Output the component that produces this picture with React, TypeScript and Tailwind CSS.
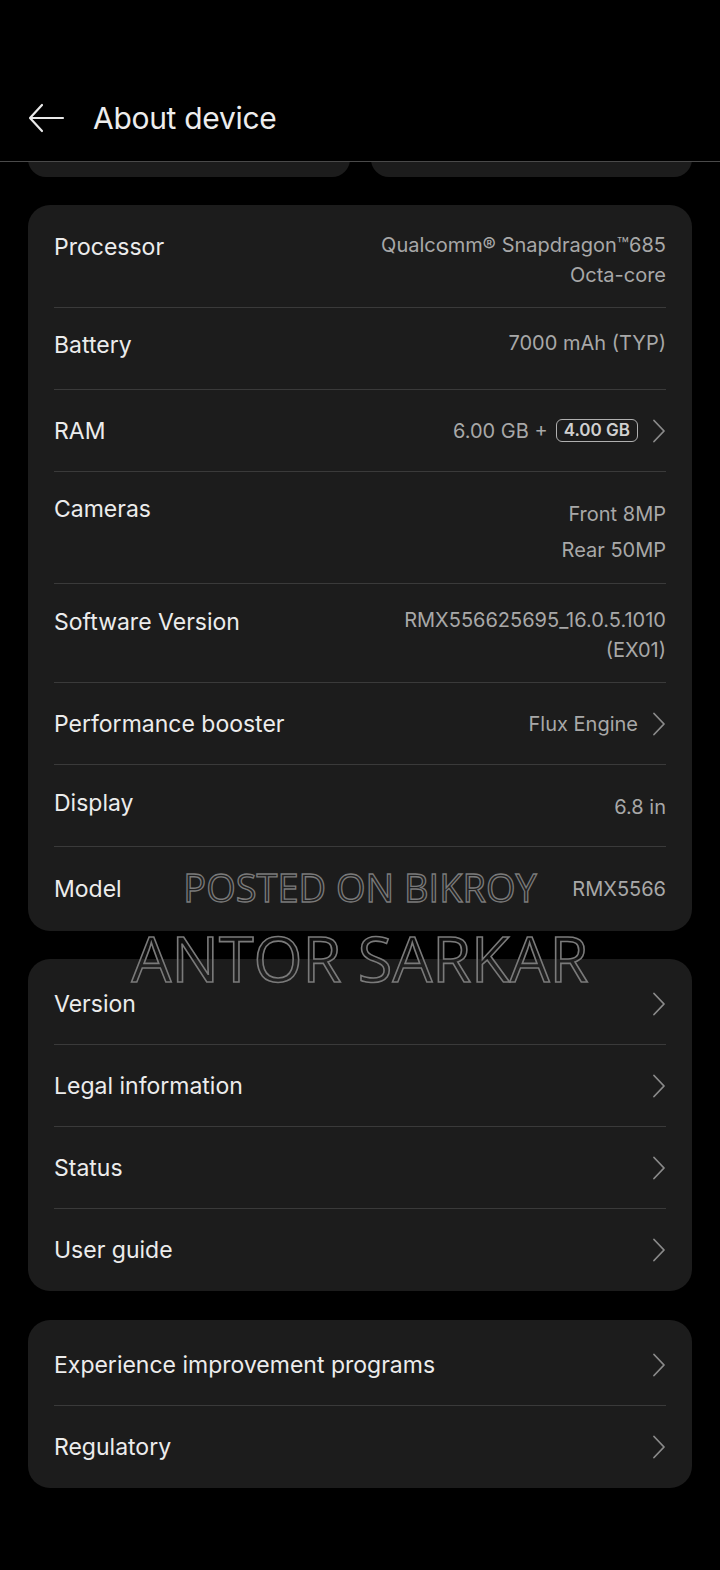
import { ReactNode } from 'react'

const font = { fontFamily: 'Inter, "Noto Sans", sans-serif' }

function Chevron() {
  return (
    <svg width="14" height="24" viewBox="0 0 14 24" className="shrink-0">
      <path d="M2 1.5 L12 12 L2 22.5" fill="none" stroke="#8a8a8a" strokeWidth="1.8" strokeLinecap="round" strokeLinejoin="round" />
    </svg>
  )
}

function Divider() {
  return <div className="h-px bg-[#3a3a3a]" />
}

type Spec = {
  label: string
  cls: string
  labelCls?: string
  value?: ReactNode
  valueCls?: string
  chevron?: boolean
}

const specs: Spec[] = [
  {
    label: 'Processor',
    cls: 'h-[102px] items-start pt-[25px]',
    labelCls: 'mt-[2px]',
    value: (
      <>
        <div>Qualcomm® Snapdragon™685</div>
        <div>Octa-core</div>
      </>
    ),
  },
  { label: 'Battery', cls: 'h-[81px] items-start pt-[22px]', value: '7000 mAh (TYP)', valueCls: 'mt-[-2px]' },
  {
    label: 'RAM',
    cls: 'h-[81px] items-center',
    value: (
      <div className="flex items-center">
        <span>6.00 GB +</span>
        <span className="ml-2 rounded-[6px] border-[1.5px] border-[#b0b0b0] px-[7px] text-[17px] leading-[21px] font-semibold text-[#d0d0d0]">
          4.00 GB
        </span>
      </div>
    ),
    chevron: true,
  },
  {
    label: 'Cameras',
    cls: 'h-[111px] items-start pt-[22px]',
    value: (
      <div className="leading-[36px]">
        <div>Front 8MP</div>
        <div>Rear 50MP</div>
      </div>
    ),
    valueCls: 'mt-[2px]',
  },
  {
    label: 'Software Version',
    cls: 'h-[98px] items-start pt-[23px]',
    value: (
      <>
        <div>RMX556625695_16.0.5.1010</div>
        <div>(EX01)</div>
      </>
    ),
    valueCls: 'mt-[-2px]',
  },
  { label: 'Performance booster', cls: 'h-[81px] items-center', value: 'Flux Engine', chevron: true },
  { label: 'Display', cls: 'h-[81px] items-start pt-[23px]', value: '6.8 in', valueCls: 'mt-[4px]' },
  { label: 'Model', cls: 'h-[84px] items-center', value: 'RMX5566' },
]

function SpecRow({ s }: { s: Spec }) {
  return (
    <div className={`flex justify-between ${s.cls}`}>
      <div className={`text-[23px] leading-[30px] text-[#ececec] ${s.labelCls ?? ''}`}>{s.label}</div>
      <div className="flex items-center gap-[14px]">
        <div className={`text-right text-[20px] leading-[30px] text-[#a8a8a8] ${s.valueCls ?? ''}`}>{s.value}</div>
        {s.chevron && <Chevron />}
      </div>
    </div>
  )
}

function LinkRow({ label }: { label: string }) {
  return (
    <div className="flex h-[81px] items-center justify-between">
      <div className="text-[23px] leading-[30px] text-[#ececec]">{label}</div>
      <Chevron />
    </div>
  )
}

function LinkCard({ items, className = '' }: { items: string[]; className?: string }) {
  return (
    <div className={`rounded-[22px] bg-[#1c1c1c] px-[26px] pt-[4px] pb-[1px] ${className}`}>
      {items.map((item, i) => (
        <div key={item}>
          {i > 0 && <Divider />}
          <LinkRow label={item} />
        </div>
      ))}
    </div>
  )
}

export default function App() {
  return (
    <div className="relative min-h-[1570px] w-[720px] overflow-hidden bg-black" style={font}>
      {/* header */}
      <div className="h-[80px]" />
      <div className="flex h-[82px] items-center border-b border-[#4a4a4a] px-[28px] pb-[5px]">
        <svg width="37" height="30" viewBox="0 0 37 30">
          <path d="M35 15 H3 M14 2 L2 15 L14 28" fill="none" stroke="#e8e8e8" strokeWidth="2.2" strokeLinecap="round" strokeLinejoin="round" />
        </svg>
        <div className="ml-[28px] text-[30px] leading-[40px] tracking-[-0.3px] text-[#ededed]">About device</div>
      </div>

      {/* scrolled-off cards */}
      <div className="flex h-[15px] items-end gap-[21px] overflow-hidden px-[28px]">
        <div className="h-[60px] flex-1 shrink-0 rounded-[18px] bg-[#1c1c1c]" />
        <div className="h-[60px] flex-1 shrink-0 rounded-[18px] bg-[#1c1c1c]" />
      </div>

      <div className="flex flex-col gap-[28px] px-[28px] pt-[28px]">
        <div className="rounded-[22px] bg-[#1c1c1c] px-[26px]">
          {specs.map((s, i) => (
            <div key={s.label}>
              {i > 0 && <Divider />}
              <SpecRow s={s} />
            </div>
          ))}
        </div>

        <LinkCard items={['Version', 'Legal information', 'Status', 'User guide']} />
        <LinkCard items={['Experience improvement programs', 'Regulatory']} className="mt-[1px]" />
      </div>

      {/* watermark */}
      <div
        className="pointer-events-none absolute left-0 right-0 top-[863px] text-center text-[38px] leading-[48px] text-[rgba(40,40,40,0.35)] [-webkit-text-stroke:1.3px_#7a7a7a]"
        style={{ fontFamily: '"Open Sans", "Noto Sans", sans-serif' }}
      >
        POSTED ON BIKROY
      </div>
      <div
        className="pointer-events-none absolute left-0 right-0 top-[918px] text-center text-[63px] leading-[80px] text-[rgba(40,40,40,0.35)] [-webkit-text-stroke:1.6px_#7a7a7a]"
        style={{ fontFamily: '"Open Sans", "Noto Sans", sans-serif' }}
      >
        ANTOR SARKAR
      </div>
    </div>
  )
}
